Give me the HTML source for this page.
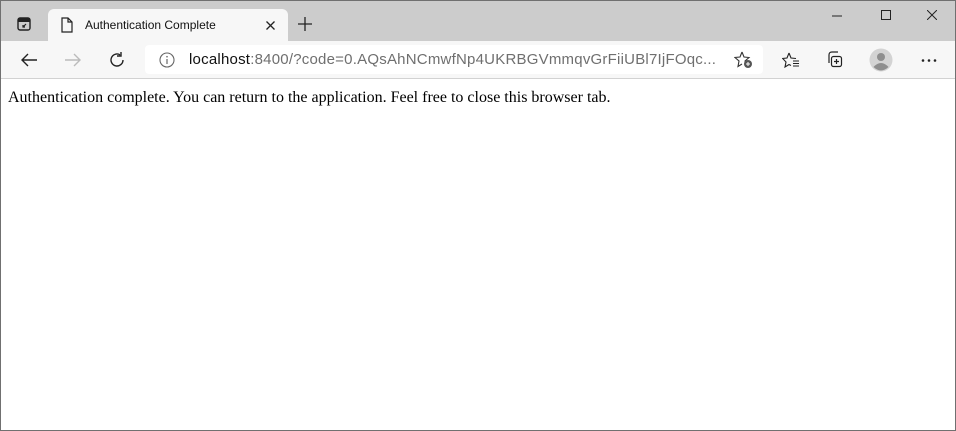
<!DOCTYPE html>
<html><head><style>
*{margin:0;padding:0;box-sizing:border-box}
body{width:956px;height:431px;position:relative;overflow:hidden;background:#fff;font-family:"Liberation Sans",sans-serif}
.frame{position:absolute;inset:0;border:1px solid #707070;pointer-events:none;z-index:9}
.title{position:absolute;left:0;top:0;width:956px;height:41px;background:#cccccc}
.tab{position:absolute;left:48px;top:9px;width:240px;height:32px;background:#f7f7f7;border-radius:6px 6px 0 0}
.tabtxt{position:absolute;left:37px;top:9px;font-size:12px;color:#111}
.tool{position:absolute;left:0;top:41px;width:956px;height:38px;background:#f7f7f7;border-bottom:1px solid #d2d2d2}
.addr{position:absolute;left:145px;top:4px;width:618px;height:29px;background:#fff;border-radius:4px}
.url{position:absolute;left:44px;top:6px;font-size:15px;letter-spacing:0.22px;color:#6f6f6f;white-space:nowrap}
.url b{font-weight:normal;color:#111}
.content{position:absolute;left:8px;top:89px;font-family:"Liberation Serif",serif;font-size:16px;color:#000}
svg{position:absolute}
</style></head><body>
<div class="title">
<svg style="left:17px;top:17px" width="14" height="14" viewBox="0 0 14 14"><rect x="1" y="1" width="12" height="12" rx="2" fill="none" stroke="#222" stroke-width="1.4"/><rect x="1" y="1" width="12" height="4" fill="#222"/><path d="M9 7 L6 10 M6 8 V10 H8" stroke="#222" stroke-width="1.2" fill="none"/></svg>
<div class="tab">
<svg style="left:13px;top:8px" width="12" height="16" viewBox="0 0 12 16"><path d="M1 1 H7 L11 5 V15 H1 Z M7 1 V5 H11" fill="none" stroke="#222" stroke-width="1.2"/></svg>
<div class="tabtxt">Authentication Complete</div>
<svg style="left:218px;top:12px" width="9" height="9" viewBox="0 0 9 9"><path d="M0.5 0.5 L8.5 8.5 M8.5 0.5 L0.5 8.5" stroke="#222" stroke-width="1.3"/></svg>
</div>
<svg style="left:298px;top:17px" width="14" height="14" viewBox="0 0 14 14"><path d="M7 0 V14 M0 7 H14" stroke="#222" stroke-width="1.3"/></svg>
<svg style="left:832px;top:15px" width="10" height="2"><path d="M0 1 H10" stroke="#222" stroke-width="1"/></svg>
<svg style="left:881px;top:10px" width="10" height="10"><rect x="0.5" y="0.5" width="9" height="9" fill="none" stroke="#222" stroke-width="1"/></svg>
<svg style="left:927px;top:10px" width="10" height="10"><path d="M0 0 L10 10 M10 0 L0 10" stroke="#222" stroke-width="1"/></svg>
</div>
<div class="tool">
<svg style="left:20px;top:11px" width="18" height="16" viewBox="0 0 18 16"><path d="M17 8 H2 M8 2 L2 8 L8 14" fill="none" stroke="#222" stroke-width="1.4"/></svg>
<svg style="left:64px;top:11px" width="18" height="16" viewBox="0 0 18 16"><path d="M1 8 H16 M10 2 L16 8 L10 14" fill="none" stroke="#bbb" stroke-width="1.4"/></svg>
<svg style="left:108px;top:10px" width="18" height="18" viewBox="0 0 18 18"><path d="M15 9 A6 6 0 1 1 12 3.8 M13 1 V5 H9" fill="none" stroke="#222" stroke-width="1.4"/></svg>
<div class="addr">
<svg style="left:14px;top:7px" width="16" height="16" viewBox="0 0 16 16"><circle cx="8" cy="8" r="7" fill="none" stroke="#666" stroke-width="1.1"/><path d="M8 7 V12" stroke="#666" stroke-width="1.2"/><circle cx="8" cy="4.7" r="0.8" fill="#666"/></svg>
<div class="url"><b>localhost</b>:8400/?code=0.AQsAhNCmwfNp4UKRBGVmmqvGrFiiUBl7IjFOqc...</div>
<svg style="left:589px;top:6px" width="20" height="18" viewBox="0 0 20 18"><path d="M8 1 L10 6 L15 6.5 L11 10 L12 13 M8 1 L6 6 L1 6.5 L5 10 L4 15.5 L8 13" fill="none" stroke="#333" stroke-width="1.1"/><circle cx="14" cy="13" r="4" fill="#555"/><path d="M14 11 V15 M12 13 H16" stroke="#fff" stroke-width="1"/></svg>
</div>
<svg style="left:782px;top:11px" width="20" height="16" viewBox="0 0 20 16"><path d="M7 1 L9 6 L14 6.5 M7 1 L5 6 L0.7 6.5 L4 10 L3 15 L7 12.5 L9 13.5" fill="none" stroke="#222" stroke-width="1.1"/><path d="M11 9 H17 M11 11.5 H17 M11 14 H17" stroke="#222" stroke-width="1.1"/></svg>
<svg style="left:826px;top:10px" width="18" height="18" viewBox="0 0 18 18"><path d="M3 12 V4 Q3 1 6 1 H12" fill="none" stroke="#222" stroke-width="1.2"/><rect x="5.5" y="5.5" width="10" height="10" rx="2" fill="none" stroke="#222" stroke-width="1.2"/><path d="M10.5 8 V13 M8 10.5 H13" stroke="#222" stroke-width="1.2"/></svg>
<svg style="left:869px;top:7px" width="24" height="24" viewBox="0 0 24 24"><circle cx="12" cy="12" r="11.5" fill="#d3d3d3"/><circle cx="12" cy="9" r="4" fill="#8e8e8e"/><path d="M4.5 19 Q12 11 19.5 19 Q12 26 4.5 19Z" fill="#8e8e8e"/></svg>
<svg style="left:921px;top:18px" width="16" height="3"><circle cx="2" cy="1.5" r="1.3" fill="#222"/><circle cx="8" cy="1.5" r="1.3" fill="#222"/><circle cx="14" cy="1.5" r="1.3" fill="#222"/></svg>
</div>
<div class="content">Authentication complete. You can return to the application. Feel free to close this browser tab.</div>
<div class="frame"></div>
</body></html>
